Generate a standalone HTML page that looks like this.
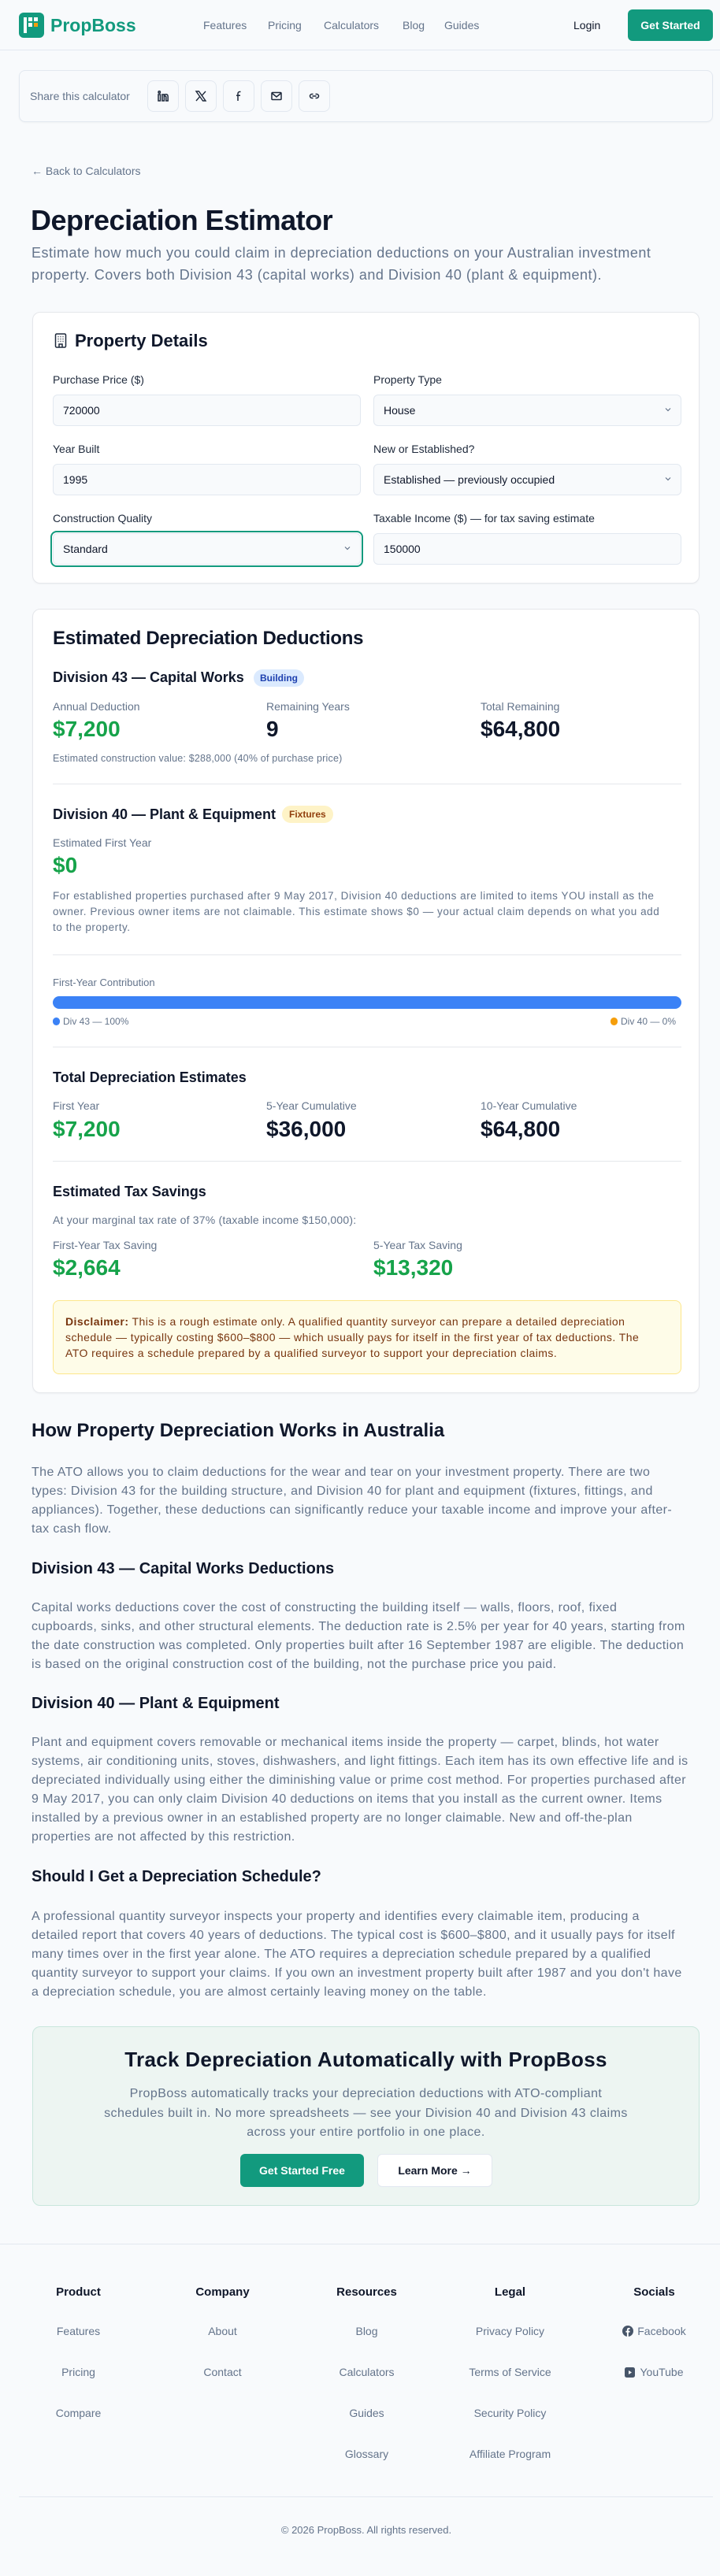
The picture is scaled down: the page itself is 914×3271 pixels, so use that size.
<!DOCTYPE html>
<html><head><meta charset="utf-8">
<style>
*{box-sizing:border-box;margin:0;padding:0}
html,body{width:914px;height:3271px;overflow:hidden;background:#f8fafc;font-family:"Liberation Sans",Arial,sans-serif;color:#0f172a}
.a{position:absolute;white-space:nowrap}
.g{color:#64748b}
.nav a{position:absolute;top:22px;line-height:20px;font-size:14px;color:#64748b;text-decoration:none}
.card{position:absolute;background:#fff;border:1px solid #e5e7eb;border-radius:10px;box-shadow:0 1px 2px rgba(0,0,0,.04)}
.lbl{position:absolute;font-size:14px;line-height:20px;color:#1e293b}
.inp{position:absolute;height:40px;width:391px;border:1px solid #e2e8f0;border-radius:6px;background:#f8fafc;font-size:14px;line-height:38px;padding-left:12px;color:#0f172a}
.chev{position:absolute;right:12px;top:14px;width:8px;height:8px}
.div{position:absolute;left:25px;width:798px;height:1px;background:#e5e7eb}
.sl{position:absolute;font-size:14px;line-height:20px;color:#64748b;white-space:nowrap}
.big{position:absolute;font-size:28px;font-weight:bold;line-height:34px}
.green{color:#16a34a}
.h3{position:absolute;font-size:18px;font-weight:bold;line-height:26px;white-space:nowrap}
.p{position:absolute;left:40px;font-size:16px;line-height:24px;color:#64748b;white-space:nowrap;letter-spacing:0.4px}
.sb{position:absolute;top:12px;width:40px;height:40px;border:1px solid #e2e8f0;border-radius:8px;background:#f8fafc;display:flex;align-items:center;justify-content:center}
.fh{position:absolute;font-size:15px;font-weight:bold;line-height:20px;text-align:center;width:183px}
.fl{position:absolute;font-size:14px;line-height:20px;color:#64748b;text-align:center;width:183px}
</style></head><body>

<!-- NAV -->
<div class="nav" style="position:absolute;left:0;top:0;width:914px;height:64px;border-bottom:1px solid #e2e8f0">
  <div style="position:absolute;left:24px;top:16px;width:32px;height:32px;border-radius:6px;background:#129a7e">
    <div style="position:absolute;left:6px;top:6px;width:4px;height:20px;background:#fff"></div>
    <div style="position:absolute;left:12px;top:6px;width:5px;height:5px;background:#fff"></div>
    <div style="position:absolute;left:19px;top:6px;width:5px;height:5px;background:#fff"></div>
    <div style="position:absolute;left:12px;top:13px;width:5px;height:5px;background:#fff"></div>
    <div style="position:absolute;left:19px;top:13px;width:5px;height:5px;background:#f59e0b"></div>
  </div>
  <div class="a" style="left:64px;top:18px;font-size:23px;line-height:28px;font-weight:bold;color:#129a7e">PropBoss</div>
  <a style="left:258px">Features</a>
  <a style="left:340px">Pricing</a>
  <a style="left:411px">Calculators</a>
  <a style="left:511px">Blog</a>
  <a style="left:564px">Guides</a>
  <a style="left:728px;color:#0f172a">Login</a>
  <div style="position:absolute;left:797px;top:12px;width:108px;height:40px;border-radius:6px;background:#129a7e;color:#fff;font-size:14px;font-weight:bold;line-height:40px;text-align:center">Get Started</div>
</div>

<!-- SHARE -->
<div style="position:absolute;left:24px;top:89px;width:881px;height:66px;border:1px solid #e2e8f0;border-radius:8px;background:#f8fafc;box-shadow:0 1px 2px rgba(0,0,0,.04)">
  <div class="a g" style="left:13px;top:22px;font-size:14px;line-height:20px">Share this calculator</div>
  <div class="sb" style="left:162px"><svg width="16" height="16" viewBox="0 0 16 16" fill="none" stroke="#1e293b" stroke-width="1.5"><rect x="2" y="6" width="2.5" height="8"/><circle cx="3.25" cy="3" r="1.2"/><path d="M7 14V6h2.3v1.2c.6-1 1.5-1.4 2.5-1.4 1.6 0 2.4 1 2.4 3V14h-2.4V9.3c0-.9-.4-1.3-1-1.3s-1.4.5-1.4 1.3V14z"/></svg></div>
  <div class="sb" style="left:210px"><svg width="16" height="16" viewBox="0 0 16 16" fill="none" stroke="#1e293b" stroke-width="1.4"><path d="M2 2h3.5l8.5 12h-3.5z"/><path d="M14 2L9.3 7.3M2 14l4.7-5.3"/></svg></div>
  <div class="sb" style="left:258px"><svg width="16" height="16" viewBox="0 0 16 16" fill="none" stroke="#1e293b" stroke-width="1.5"><path d="M10.5 2.5H9.3C8 2.5 7 3.4 7 4.8V14M5 7.2h5"/></svg></div>
  <div class="sb" style="left:306px"><svg width="16" height="16" viewBox="0 0 16 16" fill="none" stroke="#1e293b" stroke-width="1.5"><rect x="2" y="3.5" width="12" height="9" rx="1"/><path d="M2.5 4.5L8 9l5.5-4.5"/></svg></div>
  <div class="sb" style="left:354px"><svg width="16" height="16" viewBox="0 0 16 16" fill="none" stroke="#1e293b" stroke-width="1.5"><path d="M6.5 5.5H5a2.5 2.5 0 000 5h1.5M9.5 5.5H11a2.5 2.5 0 010 5H9.5M5.5 8h5"/></svg></div>
</div>

<!-- HEADER -->
<div class="a g" style="left:40px;top:207px;font-size:14px;line-height:20px">← Back to Calculators</div>
<div class="a" style="left:39px;top:258px;font-size:36px;line-height:44px;font-weight:bold;letter-spacing:-0.5px">Depreciation Estimator</div>
<div class="a g" style="left:40px;top:307px;font-size:18px;line-height:28px;letter-spacing:0.5px">Estimate how much you could claim in depreciation deductions on your Australian investment<br>property. Covers both Division 43 (capital works) and Division 40 (plant &amp; equipment).</div>

<!-- PROPERTY CARD -->
<div class="card" style="left:41px;top:396px;width:847px;height:345px">
  <svg style="position:absolute;left:27px;top:26px" width="16" height="19" viewBox="0 0 16 19" fill="none" stroke="#1e293b" stroke-width="1.5"><rect x="1.5" y="1" width="13" height="17" rx="1.5"/><path d="M4.5 4.5h1M7.5 4.5h1M10.5 4.5h1M4.5 7.5h1M7.5 7.5h1M10.5 7.5h1M4.5 10.5h1M7.5 10.5h1M10.5 10.5h1M6 18v-4h4v4"/></svg>
  <div class="a" style="left:53px;top:21px;font-size:22px;line-height:30px;font-weight:bold">Property Details</div>
  <div class="lbl" style="left:25px;top:75px">Purchase Price ($)</div>
  <div class="lbl" style="left:432px;top:75px">Property Type</div>
  <div class="inp" style="left:25px;top:104px">720000</div>
  <div class="inp" style="left:432px;top:104px">House<svg class="chev" viewBox="0 0 8 8" fill="none" stroke="#64748b" stroke-width="1.2"><path d="M1 2.5l3 3 3-3"/></svg></div>
  <div class="lbl" style="left:25px;top:163px">Year Built</div>
  <div class="lbl" style="left:432px;top:163px">New or Established?</div>
  <div class="inp" style="left:25px;top:192px">1995</div>
  <div class="inp" style="left:432px;top:192px">Established — previously occupied<svg class="chev" viewBox="0 0 8 8" fill="none" stroke="#64748b" stroke-width="1.2"><path d="M1 2.5l3 3 3-3"/></svg></div>
  <div class="lbl" style="left:25px;top:251px">Construction Quality</div>
  <div class="lbl" style="left:432px;top:251px">Taxable Income ($) — for tax saving estimate</div>
  <div style="position:absolute;left:22px;top:277px;width:397px;height:46px;border:2px solid #129a7e;border-radius:8px"></div>
  <div class="inp" style="left:25px;top:280px">Standard<svg class="chev" viewBox="0 0 8 8" fill="none" stroke="#64748b" stroke-width="1.2"><path d="M1 2.5l3 3 3-3"/></svg></div>
  <div class="inp" style="left:432px;top:280px">150000</div>
</div>

<!-- RESULTS CARD -->
<div class="card" style="left:41px;top:773px;width:847px;height:996px">
  <div class="a" style="left:25px;top:22px;font-size:24px;line-height:30px;font-weight:bold;letter-spacing:-0.3px">Estimated Depreciation Deductions</div>
  <div class="h3" style="left:25px;top:73px">Division 43 — Capital Works</div>
  <div class="a" style="left:280px;top:76px;height:22px;padding:0 8px;border-radius:11px;background:#dbeafe;color:#1e40af;font-size:12px;line-height:22px;font-weight:bold">Building</div>
  <div class="sl" style="left:25px;top:113px">Annual Deduction</div>
  <div class="sl" style="left:296px;top:113px">Remaining Years</div>
  <div class="sl" style="left:568px;top:113px">Total Remaining</div>
  <div class="big green" style="left:25px;top:135px">$7,200</div>
  <div class="big" style="left:296px;top:135px">9</div>
  <div class="big" style="left:568px;top:135px">$64,800</div>
  <div class="sl" style="left:25px;top:180px;font-size:12.5px;line-height:18px;letter-spacing:0.2px">Estimated construction value: $288,000 (40% of purchase price)</div>
  <div class="div" style="top:221px"></div>

  <div class="h3" style="left:25px;top:247px">Division 40 — Plant &amp; Equipment</div>
  <div class="a" style="left:316px;top:249px;height:22px;padding:0 9px;border-radius:11px;background:#fef3c7;color:#92400e;font-size:12px;line-height:22px;font-weight:bold">Fixtures</div>
  <div class="sl" style="left:25px;top:286px">Estimated First Year</div>
  <div class="big green" style="left:25px;top:308px">$0</div>
  <div class="sl" style="left:25px;top:354px;font-size:13.5px;line-height:20px;letter-spacing:0.55px">For established properties purchased after 9 May 2017, Division 40 deductions are limited to items YOU install as the<br>owner. Previous owner items are not claimable. This estimate shows $0 — your actual claim depends on what you add<br>to the property.</div>
  <div class="div" style="top:438px"></div>

  <div class="sl" style="left:25px;top:464px;font-size:13px">First-Year Contribution</div>
  <div style="position:absolute;left:25px;top:491px;width:798px;height:16px;border-radius:8px;background:#3b82f6"></div>
  <div style="position:absolute;left:25px;top:518px;width:9px;height:10px;border-radius:5px;background:#3b82f6"></div>
  <div class="sl" style="left:38px;top:514px;font-size:12px;line-height:18px">Div 43 — 100%</div>
  <div style="position:absolute;left:733px;top:518px;width:9px;height:10px;border-radius:5px;background:#f59e0b"></div>
  <div class="sl" style="left:746px;top:514px;font-size:12px;line-height:18px">Div 40 — 0%</div>
  <div class="div" style="top:555px"></div>

  <div class="h3" style="left:25px;top:581px">Total Depreciation Estimates</div>
  <div class="sl" style="left:25px;top:620px">First Year</div>
  <div class="sl" style="left:296px;top:620px">5-Year Cumulative</div>
  <div class="sl" style="left:568px;top:620px">10-Year Cumulative</div>
  <div class="big green" style="left:25px;top:643px">$7,200</div>
  <div class="big" style="left:296px;top:643px">$36,000</div>
  <div class="big" style="left:568px;top:643px">$64,800</div>
  <div class="div" style="top:700px"></div>

  <div class="h3" style="left:25px;top:726px">Estimated Tax Savings</div>
  <div class="sl" style="left:25px;top:765px;letter-spacing:0.2px">At your marginal tax rate of 37% (taxable income $150,000):</div>
  <div class="sl" style="left:25px;top:797px">First-Year Tax Saving</div>
  <div class="sl" style="left:432px;top:797px">5-Year Tax Saving</div>
  <div class="big green" style="left:25px;top:819px">$2,664</div>
  <div class="big green" style="left:432px;top:819px">$13,320</div>

  <div style="position:absolute;left:25px;top:877px;width:798px;height:94px;background:#fefce8;border:1px solid #fde68a;border-radius:8px"></div>
  <div class="a" style="left:41px;top:894px;font-size:14px;line-height:20px;color:#78350f;letter-spacing:0.45px"><b>Disclaimer:</b> This is a rough estimate only. A qualified quantity surveyor can prepare a detailed depreciation<br>schedule — typically costing $600–$800 — which usually pays for itself in the first year of tax deductions. The<br>ATO requires a schedule prepared by a qualified surveyor to support your depreciation claims.</div>
</div>

<!-- ARTICLE -->
<div class="a" style="left:40px;top:1802px;font-size:24px;line-height:30px;font-weight:bold">How Property Depreciation Works in Australia</div>
<div class="p" style="top:1858px">The ATO allows you to claim deductions for the wear and tear on your investment property. There are two<br>types: Division 43 for the building structure, and Division 40 for plant and equipment (fixtures, fittings, and<br>appliances). Together, these deductions can significantly reduce your taxable income and improve your after-<br>tax cash flow.</div>
<div class="a" style="left:40px;top:1978px;font-size:20px;line-height:28px;font-weight:bold">Division 43 — Capital Works Deductions</div>
<div class="p" style="top:2030px">Capital works deductions cover the cost of constructing the building itself — walls, floors, roof, fixed<br>cupboards, sinks, and other structural elements. The deduction rate is 2.5% per year for 40 years, starting from<br>the date construction was completed. Only properties built after 16 September 1987 are eligible. The deduction<br>is based on the original construction cost of the building, not the purchase price you paid.</div>
<div class="a" style="left:40px;top:2149px;font-size:20px;line-height:28px;font-weight:bold">Division 40 — Plant &amp; Equipment</div>
<div class="p" style="top:2201px">Plant and equipment covers removable or mechanical items inside the property — carpet, blinds, hot water<br>systems, air conditioning units, stoves, dishwashers, and light fittings. Each item has its own effective life and is<br>depreciated individually using either the diminishing value or prime cost method. For properties purchased after<br>9 May 2017, you can only claim Division 40 deductions on items that you install as the current owner. Items<br>installed by a previous owner in an established property are no longer claimable. New and off-the-plan<br>properties are not affected by this restriction.</div>
<div class="a" style="left:40px;top:2369px;font-size:20px;line-height:28px;font-weight:bold">Should I Get a Depreciation Schedule?</div>
<div class="p" style="top:2422px">A professional quantity surveyor inspects your property and identifies every claimable item, producing a<br>detailed report that covers 40 years of deductions. The typical cost is $600–$800, and it usually pays for itself<br>many times over in the first year alone. The ATO requires a depreciation schedule prepared by a qualified<br>quantity surveyor to support your claims. If you own an investment property built after 1987 and you don't have<br>a depreciation schedule, you are almost certainly leaving money on the table.</div>

<!-- CTA -->
<div style="position:absolute;left:41px;top:2573px;width:847px;height:228px;background:#edf5f2;border:1px solid #c9e6dc;border-radius:10px">
  <div style="position:absolute;left:0;width:845px;top:24px;text-align:center;font-size:26px;line-height:34px;font-weight:bold;letter-spacing:0.3px">Track Depreciation Automatically with PropBoss</div>
  <div style="position:absolute;left:0;width:845px;top:73px;text-align:center;font-size:16px;line-height:24.5px;color:#64748b;letter-spacing:0.45px">PropBoss automatically tracks your depreciation deductions with ATO-compliant<br>schedules built in. No more spreadsheets — see your Division 40 and Division 43 claims<br>across your entire portfolio in one place.</div>
  <div style="position:absolute;left:263px;top:161px;width:157px;height:42px;border-radius:6px;background:#129a7e;color:#fff;font-size:14px;font-weight:bold;line-height:42px;text-align:center">Get Started Free</div>
  <div style="position:absolute;left:437px;top:161px;width:146px;height:42px;border-radius:6px;background:#fff;border:1px solid #e2e8f0;font-size:14px;font-weight:bold;line-height:40px;text-align:center">Learn More →</div>
</div>

<!-- FOOTER -->
<div style="position:absolute;left:0;top:2849px;width:914px;height:1px;background:#e2e8f0"></div>
<div class="fh" style="left:8px;top:2901px">Product</div>
<div class="fh" style="left:191px;top:2901px">Company</div>
<div class="fh" style="left:374px;top:2901px">Resources</div>
<div class="fh" style="left:556px;top:2901px">Legal</div>
<div class="fh" style="left:739px;top:2901px">Socials</div>

<div class="fl" style="left:8px;top:2950px">Features</div>
<div class="fl" style="left:8px;top:3002px">Pricing</div>
<div class="fl" style="left:8px;top:3054px">Compare</div>
<div class="fl" style="left:191px;top:2950px">About</div>
<div class="fl" style="left:191px;top:3002px">Contact</div>
<div class="fl" style="left:374px;top:2950px">Blog</div>
<div class="fl" style="left:374px;top:3002px">Calculators</div>
<div class="fl" style="left:374px;top:3054px">Guides</div>
<div class="fl" style="left:374px;top:3106px">Glossary</div>
<div class="fl" style="left:556px;top:2950px">Privacy Policy</div>
<div class="fl" style="left:556px;top:3002px">Terms of Service</div>
<div class="fl" style="left:556px;top:3054px">Security Policy</div>
<div class="fl" style="left:556px;top:3106px">Affiliate Program</div>
<div class="fl" style="left:739px;top:2950px"><svg width="14" height="14" viewBox="0 0 14 14" style="vertical-align:-2px;margin-right:5px"><circle cx="7" cy="7" r="7" fill="#475569"/><path d="M7.8 14V8.6h1.6l.3-1.9H7.8V5.5c0-.5.2-.9.9-.9h1V3c-.3 0-.9-.1-1.5-.1-1.4 0-2.300.9-2.3 2.4v1.4H4.4v1.9h1.5V14z" fill="#fff"/></svg>Facebook</div>
<div class="fl" style="left:739px;top:3002px"><svg width="13" height="13" viewBox="0 0 13 13" style="vertical-align:-2px;margin-right:6px"><rect width="13" height="13" rx="2.5" fill="#475569"/><path d="M5 4v5l4-2.5z" fill="#fff"/></svg>YouTube</div>

<div style="position:absolute;left:24px;top:3170px;width:881px;height:1px;background:#e2e8f0"></div>
<div style="position:absolute;left:0;width:930px;top:3204px;text-align:center;font-size:13px;line-height:18px;color:#64748b">© 2026 PropBoss. All rights reserved.</div>

</body></html>
